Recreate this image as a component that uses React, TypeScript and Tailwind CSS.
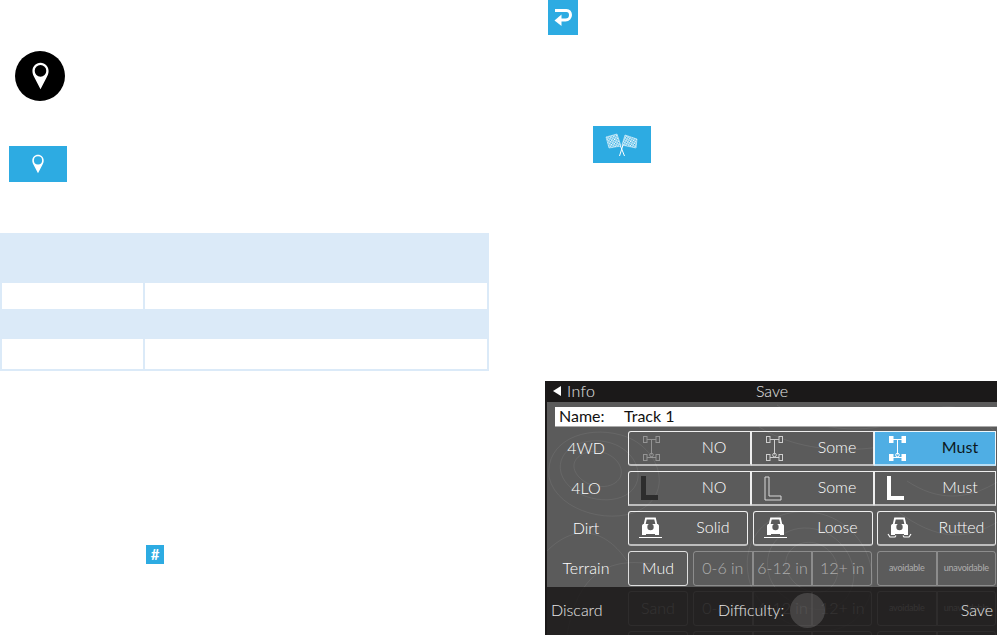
import React from "react";

const Pin = ({ w, h, hole }: { w: number; h: number; hole: string }) => (
  <svg width={w} height={h} viewBox="0 0 20 32">
    <path d="M10 0.500C4.500 0.500 0.500 5 0.500 10c0 3 1 5 2.500 8L10 31.500l7-13.500c1.500-3 2.500-5 2.500-8 0-5-4-9.500-9.500-9.500z" fill="#fff" />
    <circle cx="10" cy="10" r="6.800" fill={hole} />
  </svg>
);

const Axle = ({ c, o = 1, fill = false }: { c: string; o?: number; fill?: boolean }) => (
  <svg width="17" height="27" viewBox="0 0 17 27" fill="none" stroke={c} strokeWidth="1" opacity={o} className="ml-[14px]">
    <rect x="0.500" y="1.500" width="3.500" height="6" fill={fill ? c : "none"} />
    <rect x="13" y="1.500" width="3.500" height="6" fill={fill ? c : "none"} />
    <rect x="0.500" y="19.500" width="3.500" height="6" fill={fill ? c : "none"} />
    <rect x="13" y="19.500" width="3.500" height="6" fill={fill ? c : "none"} />
    <path d="M4 4.500h9M4 22.500h9M8.500 4.500v15" />
    <circle cx="8.500" cy="20" r="1.800" />
  </svg>
);

const Ell = ({ c, w }: { c: string; w: number }) => (
  <svg width="18" height="25" viewBox="0 0 18 25" fill="none" className="ml-[12px]">
    {w > 0 ? (
      <path d={`M${w / 2} 0V${24 - w / 2}H17`} stroke={c} strokeWidth={w} />
    ) : (
      <path d="M1 1h4v19h12v4H1z" stroke={c} strokeWidth="1" />
    )}
  </svg>
);

const Jeep = ({ rutted }: { rutted?: boolean }) => (
  <svg width="25" height="22" viewBox="0 0 25 22" fill="none" className="ml-[9px]">
    <path d="M6.500 8l1.500-6.500h9L18.500 8" stroke="#fff" strokeWidth="1.800" />
    <path d="M4 9c0-1.500 1-2 2-2h13c1 0 2 .5 2 2v8H4z" fill="#fff" />
    <circle cx="12.500" cy="10" r="3.200" fill="#5b5b5b" />
    <rect x="4" y="15" width="4" height="3" fill="#fff" />
    <rect x="17" y="15" width="4" height="3" fill="#fff" />
    {rutted ? (
      <path d="M1 17l2 3h5l1-1.500M24 17l-2 3h-5l-1-1.500" stroke="#fff" strokeWidth="1.200" />
    ) : (
      <path d="M1 20.500h23" stroke="#fff" strokeWidth="1" />
    )}
  </svg>
);

const Seg = ({ icon, label, active, rounded }: { icon: React.ReactNode; label: string; active?: boolean; rounded: string }) => (
  <div className={`flex items-center h-[35px] border border-white/90 border-b-2 border-b-white/60 ${rounded} ${active ? "bg-[#4faee4] text-[#0c1820] font-normal" : "text-white"}`}>
    <div className="w-[50px] shrink-0">{icon}</div>
    <div className="w-[70px] text-center pb-[2px]">{label}</div>
  </div>
);

const Small = ({ label, tiny, rounded, bright }: { label?: string; tiny?: boolean; rounded: string; bright?: boolean }) => (
  <div className={`flex items-center justify-center h-[35px] pb-[2px] border ${bright ? "border-white/80 text-white" : "border-white/30 text-white/50"} ${rounded} ${tiny ? "text-[9px] font-normal tracking-tight" : "text-[16px]"}`}>
    {label}
  </div>
);

const TerrainRow = ({ name, blank, bright }: { name?: string; blank?: boolean; bright?: boolean }) => (
  <div className="grid grid-cols-[60px_179px_119px] gap-x-[5px] h-[35px]">
    <Small label={name} rounded="rounded-[3px]" bright={bright} />
    <div className="grid grid-cols-3">
      <Small label={blank ? undefined : "0-6 in"} rounded="rounded-l-[3px]" />
      <Small label={blank ? undefined : "6-12 in"} rounded="" />
      <Small label={blank ? undefined : "12+ in"} rounded="rounded-r-[3px]" />
    </div>
    <div className="grid grid-cols-2">
      <Small label={blank ? undefined : "avoidable"} tiny rounded="rounded-l-[3px]" />
      <Small label={blank ? undefined : "unavoidable"} tiny rounded="rounded-r-[3px]" />
    </div>
  </div>
);

const Label = ({ children }: { children?: React.ReactNode }) => (
  <div className="w-[81px] shrink-0 pr-[3px] pb-[2px] text-center text-white">{children}</div>
);

export default function App() {
  return (
    <div className="flex w-[998px] h-[635px] overflow-hidden bg-white font-['Lato','Open_Sans',sans-serif]">
      <div className="w-[489px] shrink-0 flex flex-col items-start pt-[51px]">
        <div className="ml-[15px] w-[50px] h-[50px] rounded-full bg-black flex items-center justify-center">
          <Pin w={17} h={28} hole="#000" />
        </div>
        <div className="ml-[9px] mt-[45px] w-[58px] h-[36px] bg-[#2dabe2] flex items-center justify-center">
          <Pin w={12} h={20} hole="#2dabe2" />
        </div>
        <div className="mt-[51px] w-full bg-[#dbeaf8] grid grid-cols-[141px_342px] gap-x-[2px] px-[2px] pb-[2px]">
          <div className="col-span-2 h-[50px]" />
          <div className="bg-white h-[26px]" />
          <div className="bg-white h-[26px]" />
          <div className="col-span-2 h-[30px]" />
          <div className="bg-white h-[30px]" />
          <div className="bg-white h-[30px]" />
        </div>
        <div className="ml-[146px] mt-[174px] w-[18px] h-[19px] bg-[#2dabe2] flex items-center justify-center text-white text-[15px] font-bold leading-none">#</div>
      </div>

      <div className="ml-[56px] w-[453px] shrink-0 flex flex-col items-start">
        <div className="ml-[3px] w-[30px] h-[35px] bg-[#2dabe2] flex items-center justify-center">
          <svg width="18" height="19" viewBox="0 0 18 19" fill="none">
            <path d="M1 2.500h11.500c2.500 0 4 2 4 4.500s-2 5-5 5H6" stroke="#fff" strokeWidth="3" />
            <path d="M7.500 6.500v11.500L0.500 12.500z" fill="#fff" />
          </svg>
        </div>
        <div className="ml-[48px] mt-[91px] w-[58px] h-[37px] bg-[#2dabe2] flex items-center justify-center">
          <svg width="34" height="24" viewBox="0 0 32 24">
            <defs>
              <pattern id="chk" width="3" height="3" patternUnits="userSpaceOnUse" patternTransform="rotate(-15)">
                <rect width="3" height="3" fill="#fff" />
                <rect width="1.500" height="1.500" fill="#2dabe2" />
                <rect x="1.500" y="1.500" width="1.500" height="1.500" fill="#2dabe2" />
              </pattern>
            </defs>
            <path d="M0 4l11-3 4 12-12 2z" fill="url(#chk)" stroke="#fff" strokeWidth="0.500" />
            <path d="M19 2l12 4-1 9-14-3z" fill="url(#chk)" stroke="#fff" strokeWidth="0.500" />
            <path d="M14.500 13l4 10M17 12l-3.500 11" stroke="#fff" strokeWidth="1" fill="none" />
          </svg>
        </div>

        <div className="relative mt-[218px] w-[452px] h-[254px] bg-[#5b5b5b] border-l-2 border-[#1b1919] overflow-hidden text-[16px] font-light leading-none">
          <svg className="absolute inset-0" width="452" height="254" fill="none" stroke="#fff" strokeOpacity="0.07">
            <path d="M28 90c-6-14 14-24 30-18s22 22 10 30-34 2-40-12z" />
            <path d="M14 92c-6-24 24-38 50-30s36 36 18 50-60 6-68-20z" />
            <path d="M2 96c-4-36 36-52 72-42s52 52 24 72-88 6-96-30z" />
            <path d="M240 190c-6-18 10-32 28-28s30 26 18 42-40 4-46-14z" />
            <path d="M222 194c-8-30 16-52 46-46s50 42 32 68-70 8-78-22z" />
            <path d="M202 198c-10-44 24-74 68-66s72 62 44 100-102 10-112-34z" />
            <path d="M0 170c30-30 60-20 80 10M20 254c10-60 40-80 90-70M230 24c40 30 100 30 140 10s60 0 82 20M190 26c40 50 130 50 180 30M360 100c30 20 60 20 92 0M350 130c40 30 70 30 102 10" />
          </svg>
          <div className="relative">
            <div className="-ml-[2px] h-[21px] pb-[2px] bg-[#1b1919] grid grid-cols-3 items-center text-white/90">
              <div className="flex items-center gap-[6px] pl-[8px] tracking-wide">
                <span className="w-0 h-0 border-y-[5px] border-y-transparent border-r-[8px] border-r-white" />
                <span>Info</span>
              </div>
              <div className="text-center pl-[2px]">Save</div>
            </div>
            <div className="mt-[5px] ml-[8px] h-[20px] pb-[2px] bg-white border-b-[1px] border-[#aaa] flex items-center text-[#111] font-normal">
              <span className="w-[69px] pl-[4px]">Name:</span>
              <span>Track 1</span>
            </div>
            <div className="mt-[4px] flex flex-col gap-[5px]">
              <div className="flex items-center">
                <Label>4WD</Label>
                <div className="grid grid-cols-[123px_123px_122px]">
                  <Seg icon={<Axle c="#fff" o={0.35} />} label="NO" rounded="rounded-l-[3px]" />
                  <Seg icon={<Axle c="#fff" o={0.7} />} label="Some" rounded="" />
                  <Seg icon={<Axle c="#fff" fill />} label="Must" active rounded="" />
                </div>
              </div>
              <div className="flex items-center">
                <Label>4LO</Label>
                <div className="grid grid-cols-[123px_123px_122px]">
                  <Seg icon={<Ell c="#2d2d2d" w={5} />} label="NO" rounded="rounded-tl-[3px]" />
                  <Seg icon={<Ell c="#d8d8d8" w={0} />} label="Some" rounded="" />
                  <Seg icon={<Ell c="#fff" w={4} />} label="Must" rounded="" />
                </div>
              </div>
              <div className="flex items-center">
                <Label>Dirt</Label>
                <div className="grid grid-cols-[120px_120px_119px] gap-x-[4.500px]">
                  <Seg icon={<Jeep />} label="Solid" rounded="rounded-[3px]" />
                  <Seg icon={<Jeep />} label="Loose" rounded="rounded-[3px]" />
                  <Seg icon={<Jeep rutted />} label="Rutted" rounded="rounded-[3px]" />
                </div>
              </div>
              <div className="flex items-center">
                <Label>Terrain</Label>
                <TerrainRow name="Mud" bright />
              </div>
              <div className="flex items-center">
                <Label />
                <TerrainRow name="Sand" />
              </div>
              <div className="flex items-center">
                <Label />
                <TerrainRow blank />
              </div>
            </div>
          </div>
          <div className="absolute -left-[2px] right-0 bottom-0 h-[48px] pb-[2px] bg-[#161414]/80 flex items-center justify-end pr-[4px] text-white/90">
            <span className="absolute left-[6px]">Discard</span>
            <span className="absolute left-[173px]">Difficulty:</span>
            <span className="absolute left-[245px] top-[6px] w-[35px] h-[35px] rounded-full bg-white/15" />
            <span>Save</span>
          </div>
        </div>
      </div>
    </div>
  );
}
